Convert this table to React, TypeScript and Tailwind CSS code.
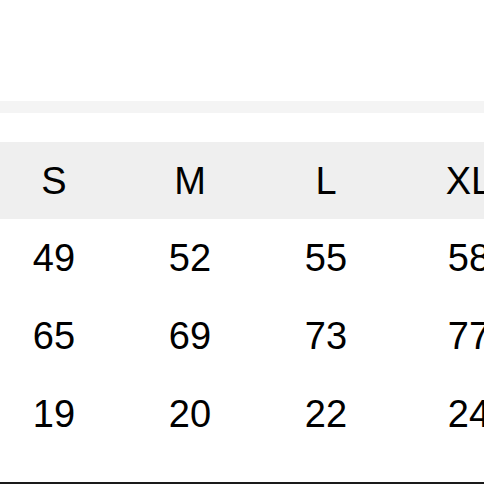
const SIZES = ['S', 'M', 'L', 'XL']

const ROWS = [
  ['49', '52', '55', '58'],
  ['65', '69', '73', '77'],
  ['19', '20', '22', '24'],
]

export default function App() {
  return (
    <div className="w-[484px] h-[484px] overflow-hidden bg-white flex flex-col font-['Liberation_Sans',Arial,sans-serif] text-[38px] text-black">
      <div className="h-[101px]" />
      <div className="h-[12px] bg-[#f4f4f4]" />
      <div className="h-[29px]" />

      {/* header */}
      <div className="h-[77px] bg-[#efefef] grid grid-cols-[136px_136px_136px_150px] ml-[-14px] items-center">
        {SIZES.map((s) => (
          <div key={s} className="text-center leading-none whitespace-nowrap">{s}</div>
        ))}
      </div>

      {ROWS.map((row, i) => (
        <div key={i} className="h-[78px] grid grid-cols-[136px_136px_136px_150px] ml-[-14px] items-center">
          {row.map((v, j) => (
            <div key={j} className="text-center leading-none whitespace-nowrap">{v}</div>
          ))}
        </div>
      ))}

      <div className="flex-1" />
      <div className="h-[2px] bg-[#1a1a1a]" />
    </div>
  )
}
